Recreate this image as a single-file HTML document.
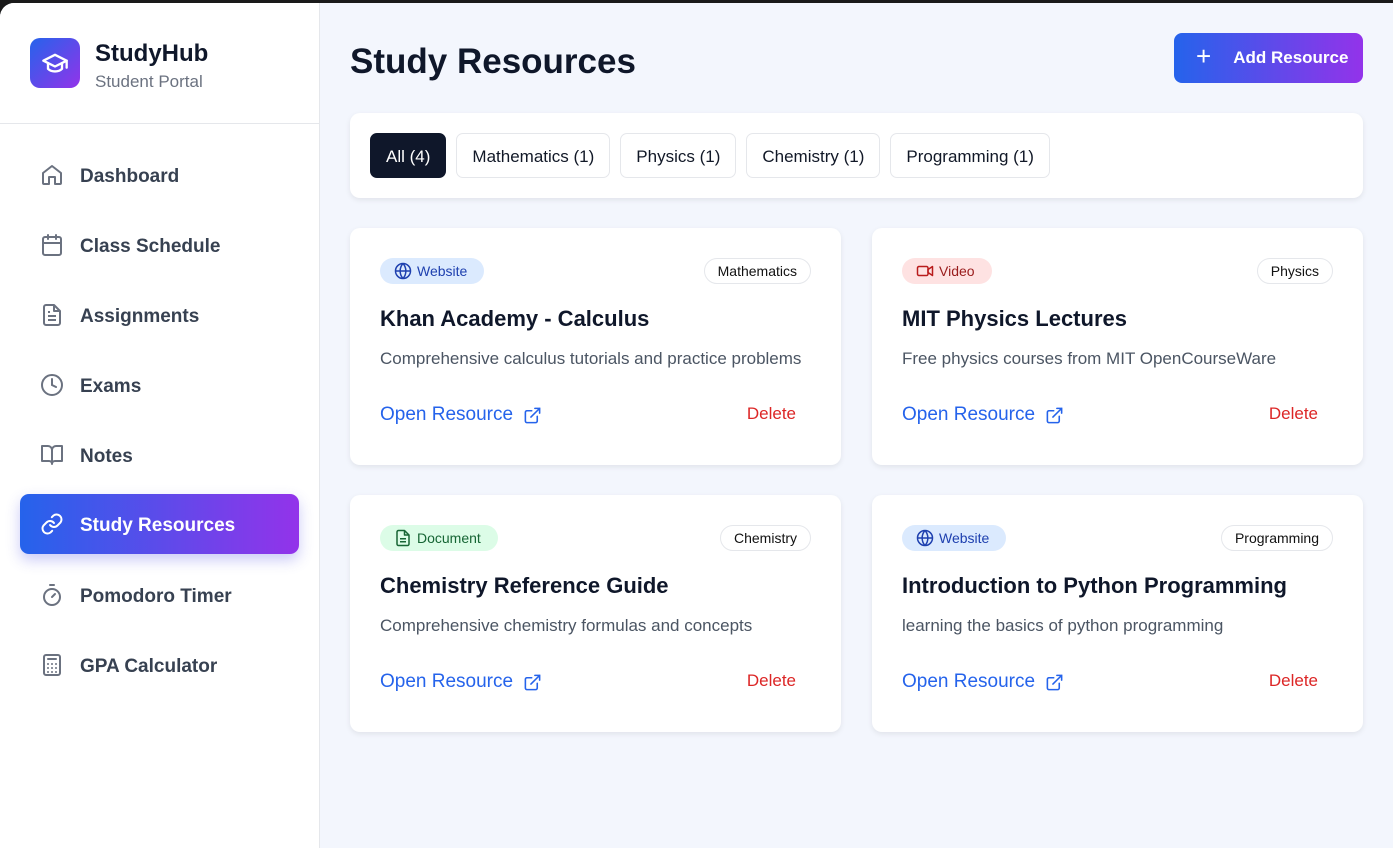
<!DOCTYPE html>
<html><head><meta charset="utf-8"><style>
*{box-sizing:border-box;margin:0;padding:0}
body{width:1393px;height:848px;background:#1a1a1a;font-family:"Liberation Sans",sans-serif;overflow:hidden;position:relative}
.page{position:absolute;left:0;top:3px;width:1393px;height:845px;background:#f3f6fd;border-top-left-radius:14px;overflow:hidden}
.side{position:absolute;left:0;top:0;width:320px;height:845px;background:#fff;border-right:1px solid #e5e7eb}
.brand{height:121px;border-bottom:1px solid #e5e7eb;position:relative}
.logo{position:absolute;left:30px;top:35px;width:50px;height:50px;border-radius:10px;background:linear-gradient(135deg,#2563eb,#9333ea);display:flex;align-items:center;justify-content:center}
.bt{position:absolute;left:95px;top:37px;font-size:24px;font-weight:bold;color:#0f172a}
.bs{position:absolute;left:95px;top:69px;font-size:17px;color:#6b7280}
.nav{position:absolute;left:20px;width:279px;height:60px;border-radius:9px;display:flex;align-items:center;padding-left:20px;font-size:19px;font-weight:bold;color:#374151}
.nav span{position:relative;top:2px}
.nav svg{margin-right:16px}
.nav.act{background:linear-gradient(90deg,#2563eb,#9333ea);color:#fff;box-shadow:0 6px 14px rgba(80,80,230,.3)}
h1{position:absolute;left:350px;top:39px;font-size:35px;color:#0f172a}
.add{position:absolute;left:1174px;top:30px;width:189px;height:50px;border-radius:8px;background:linear-gradient(90deg,#2563eb,#9333ea);color:#fff;font-size:17px;font-weight:bold;display:flex;align-items:center;padding-left:22px}
.filt{position:absolute;left:350px;top:110px;width:1013px;height:85px;background:#fff;border-radius:10px;box-shadow:0 2px 6px rgba(0,0,0,.08);padding:20px}
.chip{display:inline-block;height:45px;line-height:45px;padding:0 15px;border:1px solid #e5e7eb;border-radius:7px;font-size:17px;color:#111827;margin-right:10px;vertical-align:top}
.chip.on{background:#0f172a;color:#fff;border-color:#0f172a}
.card{position:absolute;width:491px;height:237px;background:#fff;border-radius:10px;box-shadow:0 2px 6px rgba(0,0,0,.08)}
.tag{position:absolute;left:30px;top:30px;height:26px;border-radius:13px;font-size:14px;display:flex;align-items:center;padding:0 17px 0 14px}
.tag svg{margin-right:5px}
.cat{position:absolute;right:30px;top:30px;height:26px;border:1px solid #e5e7eb;border-radius:13px;font-size:14px;color:#111;line-height:24px;padding:0 13px}
.ct{position:absolute;left:30px;top:78px;font-size:22px;font-weight:bold;color:#0f172a}
.cd{position:absolute;left:30px;top:121px;font-size:17px;color:#4b5563}
.op{position:absolute;left:30px;top:176px;font-size:19px;color:#2563eb;display:flex;align-items:center}
.op svg{margin-left:10px}
.del{position:absolute;right:45px;top:176px;font-size:17px;color:#dc2626}
</style></head><body><div class="page">
<div class="side">
<div class="brand"><div class="logo"><svg width="28" height="28" viewBox="0 0 24 24" fill="none" stroke="#fff" stroke-width="2" stroke-linecap="round" stroke-linejoin="round"><path d="M22 10 12 5 2 10l10 5 10-5z"/><path d="M6 12v5c3 3 9 3 12 0v-5"/><path d="M22 10v6"/></svg></div><div class="bt">StudyHub</div><div class="bs">Student Portal</div></div>
<div class="nav" style="top:142px"><svg width="24" height="24" viewBox="0 0 24 24" fill="none" stroke="#6b7280" stroke-width="2" stroke-linejoin="round"><path d="M3 10l9-7 9 7v10a1 1 0 0 1-1 1h-5v-7H9v7H4a1 1 0 0 1-1-1z"/></svg><span>Dashboard</span></div>
<div class="nav" style="top:212px"><svg width="24" height="24" viewBox="0 0 24 24" fill="none" stroke="#6b7280" stroke-width="2" stroke-linecap="round"><rect x="3" y="4" width="18" height="18" rx="2"/><path d="M16 2v4M8 2v4M3 10h18"/></svg><span>Class Schedule</span></div>
<div class="nav" style="top:282px"><svg width="24" height="24" viewBox="0 0 24 24" fill="none" stroke="#6b7280" stroke-width="2" stroke-linejoin="round"><path d="M14 2H6a2 2 0 0 0-2 2v16a2 2 0 0 0 2 2h12a2 2 0 0 0 2-2V8z"/><path d="M14 2v6h6M16 13H8M16 17H8M10 9H8"/></svg><span>Assignments</span></div>
<div class="nav" style="top:352px"><svg width="24" height="24" viewBox="0 0 24 24" fill="none" stroke="#6b7280" stroke-width="2" stroke-linecap="round"><circle cx="12" cy="12" r="10"/><path d="M12 6v6l4 2"/></svg><span>Exams</span></div>
<div class="nav" style="top:422px"><svg width="24" height="24" viewBox="0 0 24 24" fill="none" stroke="#6b7280" stroke-width="2" stroke-linejoin="round"><path d="M2 3h6a4 4 0 0 1 4 4v14a3 3 0 0 0-3-3H2zM22 3h-6a4 4 0 0 0-4 4v14a3 3 0 0 1 3-3h7z"/></svg><span>Notes</span></div>
<div class="nav act" style="top:491px"><svg width="24" height="24" viewBox="0 0 24 24" fill="none" stroke="#fff" stroke-width="2" stroke-linecap="round"><path d="M10 13a5 5 0 0 0 7.5.5l3-3a5 5 0 0 0-7-7l-1.7 1.7"/><path d="M14 11a5 5 0 0 0-7.5-.5l-3 3a5 5 0 0 0 7 7l1.7-1.7"/></svg><span>Study Resources</span></div>
<div class="nav" style="top:562px"><svg width="24" height="24" viewBox="0 0 24 24" fill="none" stroke="#6b7280" stroke-width="2" stroke-linecap="round"><circle cx="12" cy="14" r="8"/><path d="M10 2h4M12 14l3-3"/></svg><span>Pomodoro Timer</span></div>
<div class="nav" style="top:632px"><svg width="24" height="24" viewBox="0 0 24 24" fill="none" stroke="#6b7280" stroke-width="2" stroke-linecap="round"><rect x="4" y="2" width="16" height="20" rx="2"/><path d="M8 6h8M8 11h.01M12 11h.01M16 11h.01M8 15h.01M12 15h.01M16 15h.01M8 19h.01M12 19h.01M16 19h.01"/></svg><span>GPA Calculator</span></div>
</div>
<h1>Study Resources</h1>
<div class="add"><span style="font-size:26px;font-weight:normal;margin-right:22px;margin-top:-3px">+</span>Add Resource</div>
<div class="filt"><span class="chip on">All (4)</span><span class="chip">Mathematics (1)</span><span class="chip">Physics (1)</span><span class="chip">Chemistry (1)</span><span class="chip">Programming (1)</span></div>

<div class="card" style="left:350px;top:225px"><div class="tag" style="background:#dbeafe;color:#1e40af"><svg width="18" height="18" viewBox="0 0 24 24" fill="none" stroke="#1e40af" stroke-width="2"><circle cx="12" cy="12" r="10"/><path d="M2 12h20M12 2a15 15 0 0 1 0 20M12 2a15 15 0 0 0 0 20"/></svg>Website</div><div class="cat">Mathematics</div><div class="ct">Khan Academy - Calculus</div><div class="cd">Comprehensive calculus tutorials and practice problems</div><div class="op">Open Resource<svg width="19" height="19" viewBox="0 0 24 24" fill="none" stroke="#2563eb" stroke-width="2" stroke-linecap="round"><path d="M18 13v6a2 2 0 0 1-2 2H5a2 2 0 0 1-2-2V8a2 2 0 0 1 2-2h6M15 3h6v6M10 14L21 3"/></svg></div><div class="del">Delete</div></div>

<div class="card" style="left:872px;top:225px"><div class="tag" style="background:#fee2e2;color:#991b1b"><svg width="18" height="18" viewBox="0 0 24 24" fill="none" stroke="#b91c1c" stroke-width="2" stroke-linejoin="round"><path d="M16 10l6-4v12l-6-4z"/><rect x="2" y="6" width="14" height="12" rx="2"/></svg>Video</div><div class="cat">Physics</div><div class="ct">MIT Physics Lectures</div><div class="cd">Free physics courses from MIT OpenCourseWare</div><div class="op">Open Resource<svg width="19" height="19" viewBox="0 0 24 24" fill="none" stroke="#2563eb" stroke-width="2" stroke-linecap="round"><path d="M18 13v6a2 2 0 0 1-2 2H5a2 2 0 0 1-2-2V8a2 2 0 0 1 2-2h6M15 3h6v6M10 14L21 3"/></svg></div><div class="del">Delete</div></div>

<div class="card" style="left:350px;top:492px"><div class="tag" style="background:#dcfce7;color:#166534"><svg width="18" height="18" viewBox="0 0 24 24" fill="none" stroke="#166534" stroke-width="2" stroke-linejoin="round"><path d="M14 2H6a2 2 0 0 0-2 2v16a2 2 0 0 0 2 2h12a2 2 0 0 0 2-2V8z"/><path d="M14 2v6h6M16 13H8M16 17H8"/></svg>Document</div><div class="cat">Chemistry</div><div class="ct">Chemistry Reference Guide</div><div class="cd">Comprehensive chemistry formulas and concepts</div><div class="op">Open Resource<svg width="19" height="19" viewBox="0 0 24 24" fill="none" stroke="#2563eb" stroke-width="2" stroke-linecap="round"><path d="M18 13v6a2 2 0 0 1-2 2H5a2 2 0 0 1-2-2V8a2 2 0 0 1 2-2h6M15 3h6v6M10 14L21 3"/></svg></div><div class="del">Delete</div></div>

<div class="card" style="left:872px;top:492px"><div class="tag" style="background:#dbeafe;color:#1e40af"><svg width="18" height="18" viewBox="0 0 24 24" fill="none" stroke="#1e40af" stroke-width="2"><circle cx="12" cy="12" r="10"/><path d="M2 12h20M12 2a15 15 0 0 1 0 20M12 2a15 15 0 0 0 0 20"/></svg>Website</div><div class="cat">Programming</div><div class="ct">Introduction to Python Programming</div><div class="cd">learning the basics of python programming</div><div class="op">Open Resource<svg width="19" height="19" viewBox="0 0 24 24" fill="none" stroke="#2563eb" stroke-width="2" stroke-linecap="round"><path d="M18 13v6a2 2 0 0 1-2 2H5a2 2 0 0 1-2-2V8a2 2 0 0 1 2-2h6M15 3h6v6M10 14L21 3"/></svg></div><div class="del">Delete</div></div>
</div></body></html>
